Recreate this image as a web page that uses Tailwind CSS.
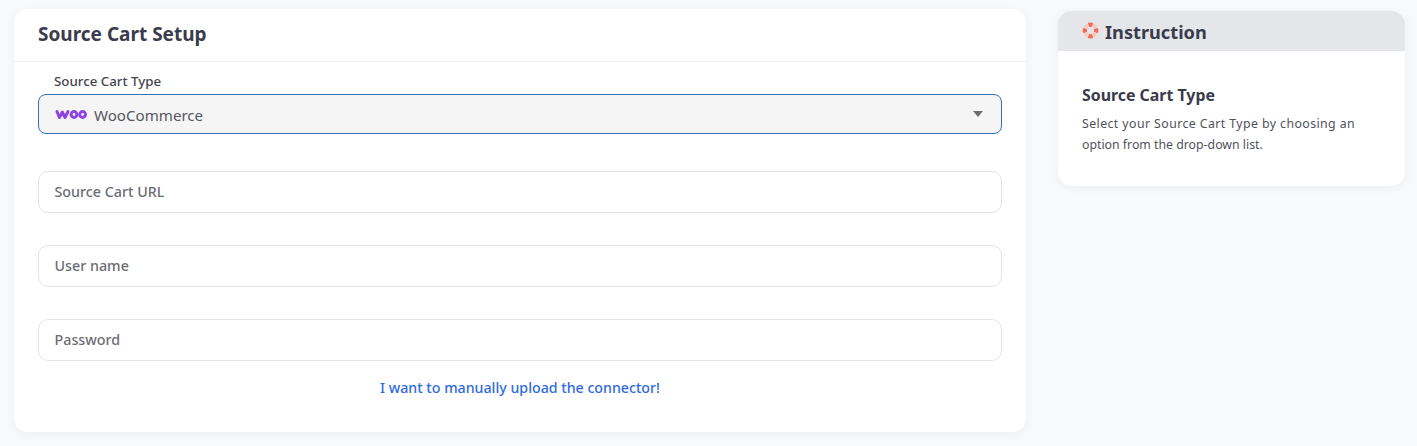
<!DOCTYPE html>
<html lang="en">
<head>
  <meta charset="UTF-8" />
  <title>Source Cart Setup</title>
  <script src="https://cdn.jsdelivr.net/npm/@tailwindcss/browser@4"></script>
</head>
<body class="font-['Noto_Sans',sans-serif] bg-[#f8f9fb] text-[#3a3b4c] h-[446px] overflow-hidden">
  <div class="flex items-start pl-[14px] pr-[12px] gap-[32px]">

    <!-- setup card -->
    <section class="w-[1012px] h-[423px] mt-[9px] bg-white rounded-[14px] shadow-[0_2px_10px_rgba(30,40,60,0.05)]">
      <div class="h-[53px] border-b border-[#f0f1f3] pl-[24px] pt-[10px]">
        <h1 class="text-[19px] leading-[30px] font-bold">Source Cart Setup</h1>
      </div>
      <div class="px-[24px]">
        <label class="block pl-[16px] pt-[10px] text-[13.3px] leading-[18px] font-medium text-[#44454f]">Source Cart Type</label>
        <div class="mt-[4px] h-[40px] flex items-center justify-between pl-[16px] pr-[18px] bg-[#f5f5f6] border border-[#3a6fc0] rounded-[8px]">
          <div class="flex items-center gap-[7px]">
            <svg class="w-[32px] h-[13px]" viewBox="0 0 32 13" fill="none" stroke="#8f45e6" stroke-width="3" stroke-linejoin="round" stroke-linecap="round">
              <path d="M2 3.5l2.4 6 3-5.4 2.6 5.4 3-6" />
              <circle cx="19" cy="6.5" r="2.9" />
              <circle cx="27.6" cy="6.5" r="2.9" />
            </svg>
            <span class="text-[15.1px] leading-[22px] pt-[1px] text-[#56575f]">WooCommerce</span>
          </div>
          <span class="w-0 h-0 border-x-[5.5px] border-x-transparent border-t-[6px] border-t-[#6e6f75]"></span>
        </div>

        <div class="mt-[37px] flex flex-col gap-[32px]">
          <div class="h-[42px] flex items-center pl-[15.5px] pb-[1px] border border-[#e3e4e8] rounded-[10px] text-[14.3px] font-medium text-[#6c6d75]">Source Cart URL</div>
          <div class="h-[42px] flex items-center pl-[15.5px] pb-[1px] border border-[#e3e4e8] rounded-[10px] text-[14.3px] font-medium text-[#6c6d75]">User name</div>
          <div class="h-[42px] flex items-center pl-[15.5px] pb-[1px] border border-[#e3e4e8] rounded-[10px] text-[14.3px] font-medium text-[#6c6d75]">Password</div>
        </div>

        <p class="mt-[17px] text-center text-[14.2px] leading-[20px] font-medium text-[#2f6bdc]">I want to manually upload the connector!</p>
      </div>
    </section>

    <!-- instruction card -->
    <aside class="w-[347px] h-[175px] mt-[11px] bg-white rounded-[14px] overflow-hidden shadow-[0_2px_10px_rgba(30,40,60,0.05)]">
      <div class="h-[40px] bg-[#e5e6ea] flex items-center gap-[6px] pl-[24px] pt-[2px]">
        <svg class="w-[17px] h-[17px] mb-[3px]" viewBox="0 0 16 16" fill="none">
          <circle cx="8" cy="8" r="5.2" stroke="#f7c9bf" stroke-width="4" />
          <path d="M6.2 2.9a5.4 5.4 0 0 1 3.6 0M6.2 13.1a5.4 5.4 0 0 0 3.6 0M2.9 6.2a5.4 5.4 0 0 0 0 3.6M13.1 6.2a5.4 5.4 0 0 1 0 3.6" stroke="#ee6c58" stroke-width="4" />
        </svg>
        <h2 class="text-[18.2px] leading-[26px] font-bold">Instruction</h2>
      </div>
      <div class="px-[24px] pt-[32px]">
        <h3 class="text-[15.9px] leading-[24px] font-bold">Source Cart Type</h3>
        <p class="mt-[6px] text-[12.3px] leading-[21px] text-[#50515c]"><span class="tracking-[0.43px]">Select your Source Cart Type by choosing an</span><br>option from the drop-down list.</p>
      </div>
    </aside>
  </div>
</body>
</html>
